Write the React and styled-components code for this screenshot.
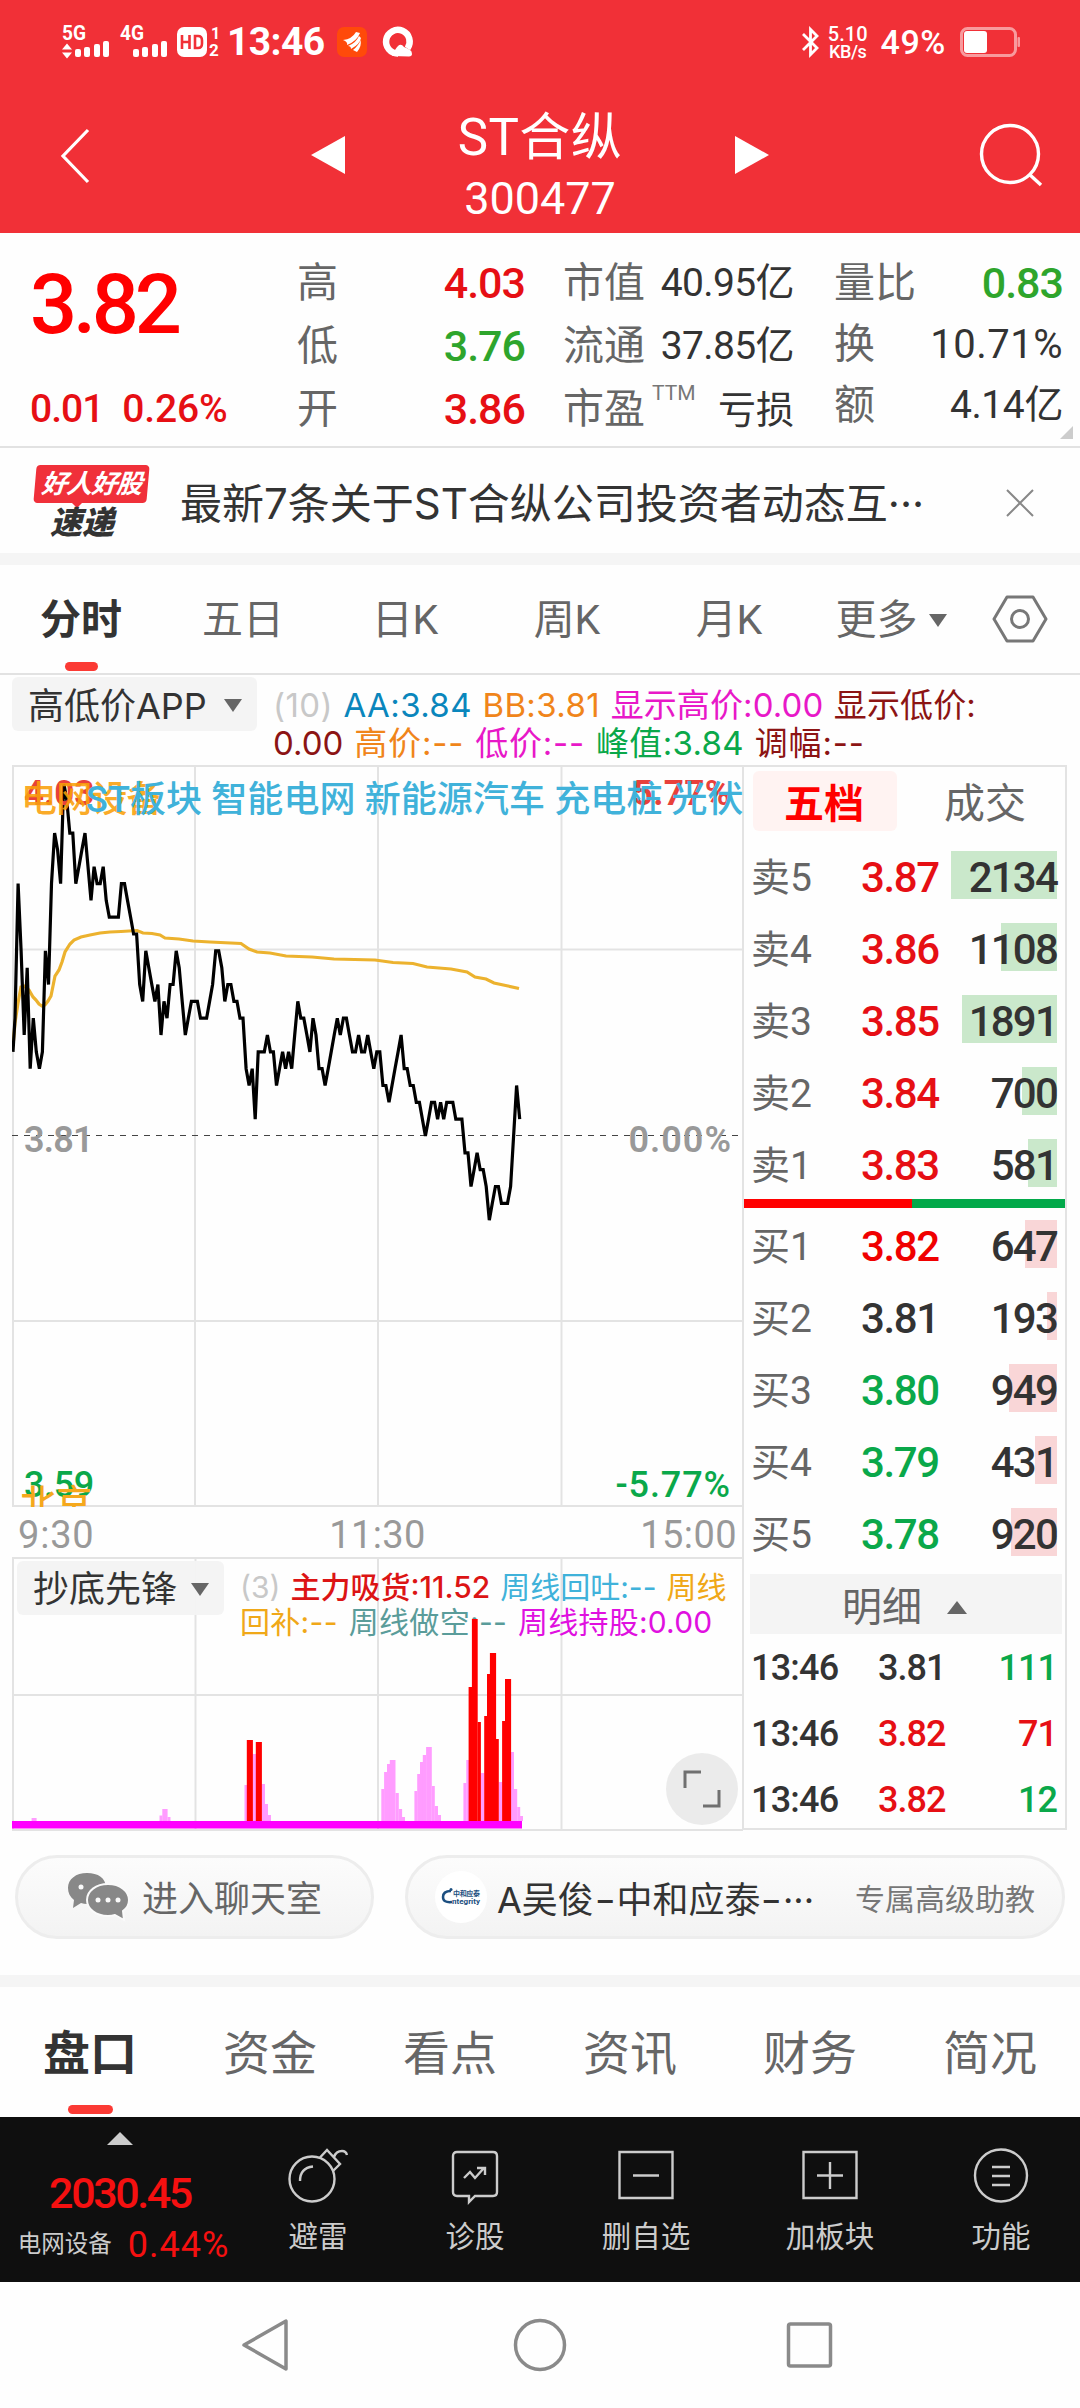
import React from 'react';
import styled, { createGlobalStyle } from 'styled-components';

const GlobalStyle = createGlobalStyle`
	* {
		box-sizing: border-box;
	}
	body {
		margin: 0;
		background: #fefefe;
		font-family: Roboto, 'Noto Sans CJK SC', sans-serif;
		color: #333;
	}
	svg {
		display: block;
		flex: none;
		overflow: visible;
	}
`;

const RED = '#e60f14';
const GREEN = '#0aa84a';

const Page = styled.div`
	width: 1080px;
	height: 2408px;
	display: flex;
	flex-direction: column;
	overflow: hidden;
	background: #fefefe;
`;
// single line of text, every label on the page goes through this
const Text = styled.span`
	font-size: ${(p) => p.$size}px;
	line-height: ${(p) => p.$line || p.$size}px;
	font-weight: ${(p) => p.$weight || 400};
	letter-spacing: ${(p) => p.$track || 0}px;
	color: ${(p) => p.$color || 'inherit'};
	white-space: pre;
`;
// rounder and wider latin, used for names and indicator values
const WideText = styled(Text)`
	font-family: Inter, 'Noto Sans CJK SC', sans-serif;
`;

/* ---------- header ---------- */
const Header = styled.header`
	height: 233px;
	flex: none;
	background: #f13037;
	color: #fff;
`;
const StatusBar = styled.div`
	height: 84px;
	display: flex;
	align-items: center;
	justify-content: space-between;
	padding: 0 60px 0 62px;
`;
const StatusGroup = styled.div`
	display: flex;
	align-items: center;
`;
const Clock = styled(Text)`
	width: 98px;
	margin: 0 12px 0 7px;
`;
const QIcon = styled.svg`
	margin-left: 16px;
`;
const NetSpeed = styled.div`
	display: flex;
	flex-direction: column;
	align-items: center;
	margin: 2px 13px 0 8px;
`;
const Battery = styled.svg`
	margin-left: 14px;
`;
const TitleBar = styled.div`
	height: 149px;
	display: grid;
	grid-template-columns: 311px 34px 390px 34px 212px 1fr;
	align-items: center;
`;
const BackIcon = styled.svg`
	margin-left: 60px;
	margin-top: -6px;
`;
const ArrowIcon = styled.svg`
	margin-top: -8px;
`;
const TitleBlock = styled.div`
	height: 100%;
	display: flex;
	flex-direction: column;
	align-items: center;
	padding-top: 25px;
`;
const SearchIcon = styled.svg`
	grid-column: 5 / 7;
	justify-self: end;
	margin: -7px 34px 0 0;
`;

/* ---------- quote ---------- */
const Quote = styled.section`
	height: 215px;
	flex: none;
	display: flex;
	border-bottom: 2px solid #e2e2e2;
	position: relative;
`;
const PriceBlock = styled.div`
	width: 297px;
	padding: 29px 0 0 30px;
`;
const ChangeRow = styled.div`
	display: flex;
	gap: 19px;
	margin-top: 34px;
`;
const Stats = styled.div`
	width: ${(p) => p.$w}px;
	margin-right: ${(p) => p.$gap}px;
	padding-top: 19px;
`;
const Stat = styled.div`
	height: ${(p) => p.$h || 63}px;
	display: flex;
	align-items: center;
	justify-content: space-between;
`;
const StatLabel = styled.div`
	display: flex;
	align-items: flex-start;
	gap: 7px;
`;
const MoreCorner = styled.i`
	position: absolute;
	right: 7px;
	bottom: 7px;
	border-left: 13px solid transparent;
	border-bottom: 13px solid #ccc;
`;

/* ---------- news ---------- */
const News = styled.section`
	height: 105px;
	flex: none;
	display: flex;
	align-items: center;
	padding: 4px 45px 0 32px;
`;
const Badge = styled.div`
	width: 118px;
	height: 76px;
	margin-right: 30px;
	display: flex;
	flex-direction: column;
	align-items: center;
	font-style: italic;
	color: #333;
`;
const BadgeTop = styled.div`
	width: 113px;
	height: 38px;
	border-radius: 4px;
	background: #f0303a;
	color: #fff;
	transform: skewX(-5deg);
	display: flex;
	align-items: center;
	justify-content: center;
`;
const BadgePointer = styled.i`
	border: 5px solid transparent;
	border-top-color: #f0303a;
	border-bottom: 0;
	margin-left: -28px;
`;
const BadgeBottom = styled(Text)`
	margin-left: -18px;
`;
const NewsTitle = styled(WideText)`
	flex: 1;
	padding-top: 2px;
`;
const Band = styled.div`
	height: 12px;
	flex: none;
	background: #f5f5f5;
`;

/* ---------- tabs ---------- */
const PeriodTabs = styled.nav`
	height: 110px;
	flex: none;
	display: flex;
	border-bottom: 2px solid #e2e2e2;
`;
const Tab = styled.div`
	width: ${(p) => p.$w}px;
	display: flex;
	align-items: center;
	justify-content: center;
	gap: 11px;
	position: relative;
	padding-top: 2px;
`;
const Underline = styled.i`
	position: absolute;
	bottom: ${(p) => p.$bottom}px;
	width: ${(p) => p.$w}px;
	height: 9px;
	border-radius: 5px;
	background: #fb3a34;
`;
const HexIcon = styled.svg`
	margin: 29px 0 0 20px;
`;
const Triangle = styled.i`
	width: 0;
	border: ${(p) => p.$half || 9}px solid transparent;
	border-${(p) => (p.$up ? 'bottom' : 'top')}: 13px solid ${(p) => p.$color || '#666'};
	border-${(p) => (p.$up ? 'top' : 'bottom')}: 0;
`;

/* ---------- chart ---------- */
const LegendBar = styled.div`
	height: 90px;
	flex: none;
	display: flex;
	padding: 2px 0 0 12px;
`;
const IndicatorButton = styled.div`
	width: ${(p) => p.$w}px;
	height: 54px;
	flex: none;
	margin-right: 16px;
	padding: 3px 15px 0 16px;
	border-radius: 6px;
	background: rgba(243, 243, 243, 0.95);
	display: flex;
	align-items: center;
	justify-content: space-between;
`;
const Legend = styled.div`
	padding-top: ${(p) => p.$top}px;
`;
const LegendLine = styled.div`
	height: ${(p) => p.$h}px;
	display: flex;
	gap: ${(p) => p.$gap}px;
	align-items: center;
`;
const Board = styled.section`
	height: 1065px;
	flex: none;
	display: flex;
	padding-left: 12px;
`;
const Charts = styled.div`
	width: 730px;
`;
const ChartBox = styled.div`
	position: relative;
	width: 731px;
	height: ${(p) => p.$h}px;
	overflow: hidden;
`;
const ChartLabel = styled(Text)`
	position: absolute;
	top: ${(p) => p.$y}px;
	${(p) => (p.$right !== undefined ? `right: ${p.$right}px` : `left: ${p.$x}px`)};
`;
const TimeAxis = styled.div`
	height: 50px;
	display: grid;
	grid-template-columns: 1fr 1fr 1fr;
	align-items: center;
	padding: 5px 5px 0 6px;
	color: #999;
	& > :nth-child(2) {
		text-align: center;
	}
	& > :nth-child(3) {
		text-align: right;
	}
`;
const SubOverlay = styled.div`
	position: absolute;
	top: 4px;
	left: 5px;
	display: flex;
`;
const BarsLayer = styled.svg`
	position: absolute;
	top: 0;
	left: 0;
`;
const ExpandButton = styled.div`
	position: absolute;
	left: 654px;
	top: 196px;
	width: 72px;
	height: 72px;
	border-radius: 50%;
	background: rgba(234, 234, 234, 0.95);
	display: flex;
	align-items: center;
	justify-content: center;
`;

/* ---------- order book ---------- */
const Book = styled.aside`
	width: 325px;
	border: 2px solid #e3e3e3;
`;
const BookTabs = styled.div`
	display: flex;
	height: 72px;
	padding: 4px 0 0 9px;
`;
const BookTab = styled.div`
	width: ${(p) => p.$w}px;
	height: 60px;
	flex: none;
	padding: 7px 2px 0 0;
	border-radius: 6px;
	background: ${(p) => (p.$active ? '#fff3f2' : 'none')};
	display: flex;
	align-items: center;
	justify-content: center;
`;
const Level = styled.div`
	height: 72px;
	display: grid;
	grid-template-columns: 110px 90px 1fr;
	align-items: center;
	padding: 0 8px 0 7px;
	& > span {
		padding-top: 6px;
	}
`;
const Volume = styled.div`
	height: 48px;
	padding-top: 6px;
	display: flex;
	align-items: center;
	justify-content: flex-end;
	background: linear-gradient(${(p) => p.$fill}, ${(p) => p.$fill}) right / ${(p) => p.$bar}px 100% no-repeat;
`;
const RatioBar = styled.div`
	height: 9px;
	background: linear-gradient(90deg, #ff0000 168px, #02a94a 168px);
`;
const DetailHead = styled.div`
	height: 60px;
	margin: 6px 3px 0 6px;
	padding: 7px 3px 0 0;
	background: #f4f4f4;
	display: flex;
	align-items: center;
	justify-content: center;
	gap: 25px;
`;
const Trade = styled.div`
	height: 66px;
	display: grid;
	grid-template-columns: 127px 90px 1fr;
	align-items: center;
	padding: 2px 8px 0 7px;
	& > :last-child {
		text-align: right;
	}
`;

/* ---------- below the chart ---------- */
const ChatRow = styled.div`
	height: 145px;
	flex: none;
	display: flex;
	gap: 31px;
	padding: 25px 0 0 15px;
`;
const Pill = styled.div`
	width: ${(p) => p.$w}px;
	height: 84px;
	border-radius: 42px;
	border: 3px solid #ededed;
	background: linear-gradient(#fcfcfc, #f3f3f3);
	display: flex;
	align-items: center;
	padding: 0 27px 0 ${(p) => p.$pad}px;
	& > span {
		padding-top: 5px;
	}
`;
const ChatIcon = styled.svg`
	margin-right: 12px;
`;
const Avatar = styled.div`
	width: 52px;
	height: 52px;
	margin-right: 10px;
	border-radius: 50%;
	background: #fff;
	display: flex;
	align-items: center;
	justify-content: center;
	flex: none;
`;
// hyphen stretched to the width of the surrounding glyphs
const Dash = styled.b`
	display: inline-block;
	font-weight: 400;
	transform: scaleX(1.3);
	margin: 0 3px;
`;
const PillNote = styled(Text)`
	margin-left: auto;
`;
const SectionTabs = styled.nav`
	height: 130px;
	flex: none;
	display: flex;
`;

/* ---------- bottom ---------- */
const BottomBar = styled.footer`
	height: 165px;
	flex: none;
	display: flex;
	background: #0f0f0f;
	color: #ccc;
`;
const Sector = styled.div`
	width: 240px;
	display: flex;
	flex-direction: column;
	align-items: center;
	padding-top: 15px;
`;
const SectorValue = styled(Text)`
	margin-top: 26px;
`;
const SectorRow = styled.div`
	display: flex;
	align-items: center;
	gap: 16px;
	margin: 12px 0 0 7px;
`;
const Actions = styled.div`
	flex: 1;
	display: grid;
	grid-template-columns: 156px 158px 184px 184px 1fr;
`;
const Action = styled.div`
	display: flex;
	flex-direction: column;
	align-items: center;
	gap: 12px;
	padding-top: 30px;
`;
const SystemNav = styled.div`
	flex: 1;
	display: flex;
	justify-content: center;
	align-items: center;
	gap: 216px;
	padding-right: 5px;
	& > :first-child {
		margin-right: 7px;
	}
	& > :last-child {
		margin-left: 2px;
	}
`;

// price in ticks of 0.01 above or below yesterday's close, one per minute
const ticks = [
	5, 7, 15, 11, 6, 10, 4, 7, 5, 4, 5, 11, 9, 15, 18, 17, 15, 21, 20, 18, 18, 15, 16, 17, 18, 16, 14, 16, 15, 15, 16, 14,
	13, 13, 13, 13, 15, 15, 14, 13, 12, 12, 9, 8, 11, 10, 9, 8, 9, 6, 8, 7, 9, 9, 11, 10, 8, 6, 7, 8, 8, 8, 7, 7, 7, 8, 9,
	11, 11, 10, 8, 9, 9, 8, 8, 7, 7, 4, 3, 4, 1, 5, 5, 5, 6, 5, 5, 3, 4, 5, 4, 5, 4, 6, 8, 7, 7, 6, 5, 7, 6, 4, 4, 3, 4,
	5, 6, 7, 6, 7, 7, 6, 5, 5, 6, 5, 5, 6, 5, 4, 5, 5, 3, 3, 2, 3, 4, 5, 6, 4, 4, 3, 3, 2, 2, 1, 0, 1, 2, 2, 1, 2, 1, 2,
	2, 2, 1, 1, 1, -1, -1, -3, -2, -1, -2, -2, -3, -5, -4, -3, -3, -4, -4, -4, -3, 0, 3, 1,
];
const priceLine = ticks.map((t, i) => `${Math.max(1, i * 3.04).toFixed(1)},${(371 - t * 16.83).toFixed(1)}`).join(' ');

const averageLine =
	'1,281 3,258 6,238 9,222 12,221 17,225 21,232 24,235 27,239 30,241 33,240 36,236 39,231 41,221 43,211 47,205 50,197 53,187 58,179 62,175 69,172 78,170 88,168 98,167 109,166.500 125,165.500 131,168 140,168.500 148,170 153,173 167,174 181,176 198,177 229,178.500 237,184 245,187 258,188 274,191 300,192 322,194 363,195 381,197.500 401,198.500 415,202 439,204 455,207 463,212 474,214 482,218 496,221 507,223.500';

// x, width, height
const pinkBars = [
	[31.6, 5, 3], [159.5, 3, 5.5], [162.3, 5.3, 12], [167.5, 3, 4], [244.5, 3, 36], [253, 3, 67], [262, 3, 37],
	[264.8, 3.2, 17], [268, 3, 6], [381.3, 3, 32], [384.1, 3, 49], [387, 3, 57], [389.8, 5.7, 61], [395.5, 3.3, 28],
	[398.8, 3.3, 12], [402, 3, 4], [414.4, 3, 30], [417.2, 3, 47], [420, 3, 59], [422.8, 3.3, 66], [426.1, 5.7, 74],
	[431.8, 3, 35], [434.6, 3.4, 15], [438, 3, 6], [463.4, 3, 38], [466.3, 3, 61], [480.9, 3.3, 48], [498.8, 3.3, 39],
	[511, 3, 69], [513.9, 3.3, 32], [517.2, 3, 14], [520, 3, 5],
];
const redBars = [
	[246.8, 6.1, 81], [255.8, 6.1, 79], [468.6, 3.4, 134], [471.9, 5.8, 202], [477.6, 3.3, 99], [484.2, 2.9, 105],
	[487, 3, 147], [489.9, 6.2, 168], [496, 2.8, 82], [502.1, 3, 100], [505, 6.1, 142],
];

const sells = [
	['卖5', '3.87', '2134', 107, RED],
	['卖4', '3.86', '1108', 56, RED],
	['卖3', '3.85', '1891', 95, RED],
	['卖2', '3.84', '700', 35, RED],
	['卖1', '3.83', '581', 29, RED],
];
const buys = [
	['买1', '3.82', '647', 32, '#f00000'],
	['买2', '3.81', '193', 10, '#333'],
	['买3', '3.80', '949', 48, GREEN],
	['买4', '3.79', '431', 22, GREEN],
	['买5', '3.78', '920', 46, GREEN],
];
const trades = [
	['13:46', '3.81', '111', '#333', GREEN],
	['13:46', '3.82', '71', RED, RED],
	['13:46', '3.82', '12', RED, GREEN],
];

function Signal({ label, arrows }) {
	return (
		<svg width={arrows ? 58 : 57} height='36' viewBox={arrows ? '0 0 58 36' : '0 0 57 36'} fill='#fff'>
			<text x='0' y='16' fontSize='20' fontWeight='700' textLength='24' lengthAdjust='spacingAndGlyphs'>
				{label}
			</text>
			{arrows && <path d='M0 25.500l5-6 5 6zM0 28.500l5 6 5-6z' />}
			<rect x='13' y='25' width='6' height='8' rx='2' />
			<rect x='22' y='23' width='6' height='10' rx='2' />
			<rect x='32' y='20' width='6' height='13' rx='2' />
			<rect x='41' y='17' width='6' height='16' rx='2' />
		</svg>
	);
}

function Top() {
	return (
		<Header>
			<StatusBar>
				<StatusGroup>
					<Signal label='5G' arrows />
					<Signal label='4G' />
					<svg width='43' height='32' viewBox='0 0 43 32' fill='#fff'>
						<rect x='0' y='1' width='30' height='30' rx='7' />
						<path d='M5 9v14M5 16h7.500M12.500 9v14M18 10v12h3q4 0 4-4.500v-3q0-4.500-4-4.500z' fill='none' stroke='#f13037' strokeWidth='2.600' />
						<text x='34' y='13' fontSize='16' fontWeight='700'>1</text>
						<text x='32' y='30' fontSize='17' fontWeight='700'>2</text>
					</svg>
					<Clock $size={39} $weight={700} $track={-0.6}>13:46</Clock>
					<svg width='30' height='30' viewBox='0 0 30 30'>
						<rect width='30' height='30' rx='7' fill='#ff4a0a' />
						<path d='M6 13Q15 12 19 5L23 6Q20 14 10 18Q11 15 6 13zM11 19Q19 16 22 9L24 11Q23 17 14 22Q14 19 11 19zM16 23Q22 18 23.500 13Q25 19 20 25z' fill='#fff' />
					</svg>
					<QIcon width='30' height='30' viewBox='0 0 30 30'>
						<path d='M24.500 21.500A11.800 11.800 0 1 0 15 26.500' fill='none' stroke='#fff' strokeWidth='6.500' />
						<path d='M9 29q3-7 6-10 3-3 6 1 3 1 6 3 2 1 2 4 0 2-3 2.500z' fill='#fff' />
					</QIcon>
				</StatusGroup>
				<StatusGroup>
					<svg width='19' height='30' viewBox='0 0 19 30' fill='none' stroke='#fff' strokeWidth='2.800'>
						<path d='M2 7l14 14-6.500 6.500V2.500L16 9 2 23' />
					</svg>
					<NetSpeed>
						<Text $size={20} $line={17} $weight={500}>5.10</Text>
						<Text $size={18} $line={17} $weight={500} $track={-0.4}>KB/s</Text>
					</NetSpeed>
					<Text $size={34} $line={34} $weight={500} $track={0.6}>49%</Text>
					<Battery width='60' height='30' viewBox='0 0 60 30'>
						<rect x='1.500' y='1.500' width='54' height='27' rx='6' fill='none' stroke='#f89a9d' strokeWidth='3' />
						<rect x='4' y='4' width='23' height='22' rx='3' fill='#fff' />
						<rect x='57.500' y='10' width='2.500' height='10' rx='1' fill='#f89a9d' />
					</Battery>
				</StatusGroup>
			</StatusBar>
			<TitleBar>
				<BackIcon width='32' height='56' viewBox='0 0 32 56' fill='none' stroke='#fff' strokeWidth='3.200'>
					<path d='M28 2L3 28l25 26' />
				</BackIcon>
				<ArrowIcon width='34' height='40' viewBox='0 0 34 40'>
					<path d='M34 1v38L0 20z' fill='#fff' />
				</ArrowIcon>
				<TitleBlock>
					<Text $size={51} $line={58} $track={0.4}>ST合纵</Text>
					<Text $size={45} $line={64}>300477</Text>
				</TitleBlock>
				<ArrowIcon width='34' height='40' viewBox='0 0 34 40'>
					<path d='M0 1v38L34 20z' fill='#fff' />
				</ArrowIcon>
				<SearchIcon width='66' height='66' viewBox='0 0 66 66' fill='none' stroke='#fff' strokeWidth='3.400'>
					<circle cx='30' cy='32' r='28.500' />
					<path d='M49 52l12 11' />
				</SearchIcon>
			</TitleBar>
		</Header>
	);
}

function QuotePanel() {
	return (
		<Quote>
			<PriceBlock>
				<Text as='div' $size={83} $line={86} $weight={500} $track={-4.2} $color='#ff0000'>3.82</Text>
				<ChangeRow>
					<Text $size={39} $line={54} $weight={500} $track={-1} $color={RED}>0.01</Text>
					<Text $size={39} $line={54} $weight={500} $track={-0.2} $color={RED}>0.26%</Text>
				</ChangeRow>
			</PriceBlock>
			<Stats $w={228} $gap={38}>
				<Stat>
					<Text $size={41} $color='#666'>高</Text>
					<Text $size={43} $weight={500} $track={-1} $color={RED}>4.03</Text>
				</Stat>
				<Stat>
					<Text $size={41} $color='#666'>低</Text>
					<Text $size={43} $weight={500} $track={-1} $color='#2ea52c'>3.76</Text>
				</Stat>
				<Stat>
					<Text $size={41} $color='#666'>开</Text>
					<Text $size={43} $weight={500} $track={-1} $color={RED}>3.86</Text>
				</Stat>
			</Stats>
			<Stats $w={231} $gap={40}>
				<Stat>
					<Text $size={41} $color='#666'>市值</Text>
					<Text $size={39} $track={-0.6}>40.95亿</Text>
				</Stat>
				<Stat>
					<Text $size={41} $color='#666'>流通</Text>
					<Text $size={39} $track={-0.6}>37.85亿</Text>
				</Stat>
				<Stat>
					<StatLabel>
						<Text $size={41} $color='#666'>市盈</Text>
						<Text $size={21} $line={8} $color='#777'>TTM</Text>
					</StatLabel>
					<Text $size={38}>亏损</Text>
				</Stat>
			</Stats>
			<Stats $w={229} $gap={0}>
				<Stat $h={62}>
					<Text $size={41} $color='#666'>量比</Text>
					<Text $size={43} $weight={500} $track={-1} $color='#2ea52c'>0.83</Text>
				</Stat>
				<Stat $h={61}>
					<Text $size={41} $color='#666'>换</Text>
					<Text $size={40} $track={0.5}>10.71%</Text>
				</Stat>
				<Stat $h={61}>
					<Text $size={41} $color='#666'>额</Text>
					<Text $size={39} $track={-0.4}>4.14亿</Text>
				</Stat>
			</Stats>
			<MoreCorner />
		</Quote>
	);
}

function NewsRow() {
	return (
		<News>
			<Badge>
				<BadgeTop>
					<Text $size={26} $weight={700} $track={-1}>好人好股</Text>
				</BadgeTop>
				<BadgePointer />
				<BadgeBottom $size={32} $line={30} $weight={900}>速递</BadgeBottom>
			</Badge>
			<NewsTitle $size={42}>最新7条关于ST合纵公司投资者动态互···</NewsTitle>
			<svg width='30' height='30' viewBox='0 0 30 30' stroke='#888' strokeWidth='2'>
				<path d='M2 2l26 26M28 2L2 28' />
			</svg>
		</News>
	);
}

function Periods() {
	return (
		<PeriodTabs>
			{['分时', '五日', '日K', '周K', '月K', '更多'].map((name, i) => (
				<Tab key={name} $w={162}>
					<Text $size={41} $weight={i ? 400 : 700} $color={i ? '#666' : '#333'}>{name}</Text>
					{i === 0 && <Underline $w={33} $bottom={2} />}
					{i === 5 && <Triangle />}
				</Tab>
			))}
			<HexIcon width='56' height='50' viewBox='0 0 56 50' fill='none' stroke='#777' strokeWidth='3'>
				<path d='M15 3h26l13 22-13 22H15L2 25z' strokeLinejoin='round' />
				<circle cx='28' cy='25' r='8.500' />
			</HexIcon>
		</PeriodTabs>
	);
}

function MainChart() {
	return (
		<ChartBox $h={742}>
			<ChartLabel $x={12} $y={11} $size={35} $line={36} $weight={700} $color='#e8413b'>4.03</ChartLabel>
			<ChartLabel $right={12} $y={11} $size={35} $line={36} $weight={700} $track={0.4} $color='#e8413b'>5.77%</ChartLabel>
			<ChartLabel $x={12} $y={702} $size={36} $line={36} $weight={500} $track={-0.4} $color={GREEN}>3.59</ChartLabel>
			<ChartLabel $right={12} $y={702} $size={36} $line={36} $weight={500} $track={0.9} $color={GREEN}>-5.77%</ChartLabel>
			<svg width='731' height='742' viewBox='0 0 731 742' fill='none'>
				<path d='M1 0V742M183 0V742M366 0V742M549.500 0V742M0 1H731M0 184.500H731M0 556H731M0 741H731' stroke='#e3e3e3' strokeWidth='2' />
				<path d='M0 370.500H731' stroke='#444' strokeWidth='1.200' strokeDasharray='6 6' />
				<polyline points={averageLine} stroke='#ecb22e' strokeWidth='3.200' />
				<polyline points={priceLine} stroke='#000' strokeWidth='3.200' />
			</svg>
			<ChartLabel $x={12} $y={357} $size={36} $line={36} $weight={600} $track={-0.8} $color='#999'>3.81</ChartLabel>
			<ChartLabel $right={11} $y={357} $size={36} $line={36} $weight={600} $track={1} $color='#999'>0.00%</ChartLabel>
			<ChartLabel $x={9} $y={17} $size={36} $line={36} $track={-0.8} $weight={500} $color='rgba(250,160,10,0.9)'>电网设备</ChartLabel>
			<ChartLabel $x={74} $y={17} $size={36} $line={36} $track={0.1} $weight={500} $color='#40b2da'>
				ST板块 智能电网 新能源汽车 充电桩 光伏
			</ChartLabel>
			<ChartLabel $x={8} $y={721} $size={36} $line={36} $weight={500} $color='#f5a81c'>北京</ChartLabel>
		</ChartBox>
	);
}

function SubChart() {
	return (
		<ChartBox $h={274}>
			<svg width='731' height='274' viewBox='12 0 731 274'>
				<path d='M13 0V274M195.500 0V274M378 0V274M561.500 0V274M12 1H743M12 138H743M12 273H743' stroke='#e3e3e3' strokeWidth='2' />
			</svg>
			<SubOverlay>
				<IndicatorButton $w={207}>
					<Text $size={36}>抄底先锋</Text>
					<Triangle />
				</IndicatorButton>
				<Legend $top={8}>
					<LegendLine $h={35} $gap={10}>
						<WideText $size={30} $color='#c8c8c8'>(3)</WideText>
						<WideText $size={30} $weight={500} $color='#dc1414'>主力吸货:11.52</WideText>
						<WideText $size={30} $color='#40b2da'>周线回吐:--</WideText>
						<WideText $size={30} $color='#f0a818'>周线</WideText>
					</LegendLine>
					<LegendLine $h={35} $gap={11}>
						<WideText $size={30} $track={0.3} $color='#f0a818'>回补:--</WideText>
						<WideText $size={30} $track={0.3} $color='#5a9c9a'>周线做空:--</WideText>
						<WideText $size={30} $track={0.2} $color='#e010e0'>周线持股:0.00</WideText>
					</LegendLine>
				</Legend>
			</SubOverlay>
			<BarsLayer width='731' height='274' viewBox='12 0 731 274'>
				{pinkBars.map(([x, w, h]) => (
					<rect key={x} x={x} y={264 - h} width={w} height={h} fill='#ff9cff' />
				))}
				{redBars.map(([x, w, h]) => (
					<rect key={x} x={x} y={264 - h} width={w} height={h} fill='#ff0000' />
				))}
				<rect x='12' y='264' width='510' height='7.500' fill='#ff00ff' />
			</BarsLayer>
			<ExpandButton>
				<svg width='38' height='38' viewBox='0 0 38 38' fill='none' stroke='#707070' strokeWidth='3'>
					<path d='M2 18V2h16M36 20v16H20' />
				</svg>
			</ExpandButton>
		</ChartBox>
	);
}

function Levels({ rows, fill }) {
	return rows.map(([name, price, volume, bar, color]) => (
		<Level key={name}>
			<Text $size={39} $color='#666'>{name}</Text>
			<Text $size={42} $weight={500} $track={-1.4} $color={color}>{price}</Text>
			<Volume $bar={bar} $fill={fill}>
				<Text $size={42} $weight={500} $track={-1.8}>{volume}</Text>
			</Volume>
		</Level>
	));
}

function OrderBook() {
	return (
		<Book>
			<BookTabs>
				<BookTab $w={144} $active>
					<Text $size={40} $weight={700} $color='#ff0000'>五档</Text>
				</BookTab>
				<BookTab $w={178}>
					<Text $size={41} $color='#666'>成交</Text>
				</BookTab>
			</BookTabs>
			<Levels rows={sells} fill='#cae8cb' />
			<RatioBar />
			<Levels rows={buys} fill='#f9d6d7' />
			<DetailHead>
				<Text $size={40} $color='#666'>明细</Text>
				<Triangle $up $half={10} />
			</DetailHead>
			{trades.map(([time, price, volume, priceColor, volumeColor], i) => (
				<Trade key={i}>
					<Text $size={36} $weight={500} $track={-0.8}>{time}</Text>
					<Text $size={36} $weight={500} $track={-1} $color={priceColor}>{price}</Text>
					<Text $size={36} $weight={500} $track={-1} $color={volumeColor}>{volume}</Text>
				</Trade>
			))}
		</Book>
	);
}

function ChatEntries() {
	return (
		<ChatRow>
			<Pill $w={359} $pad={50}>
				<ChatIcon width='62' height='50' viewBox='0 0 62 50'>
					<path d='M19 1C8 1 0 7 0 16c0 5 2 9 6 12l-1 8 8-5q3 1 6 1C31 32 38 26 38 16S30 1 19 1z' fill='#888' />
					<path d='M40 12c12 0 21 7 21 16 0 5-3 9-6 11l1 9-9-5q-3 1-7 1c-12 0-21-7-21-16s9-16 21-16z' fill='#888' stroke='#fafafa' strokeWidth='2' />
					<circle cx='13' cy='15' r='2.500' fill='#fafafa' />
					<circle cx='30' cy='28' r='2.500' fill='#fafafa' />
					<circle cx='40' cy='28' r='2.500' fill='#fafafa' />
					<circle cx='50' cy='28' r='2.500' fill='#fafafa' />
				</ChatIcon>
				<Text $size={36} $color='#666'>进入聊天室</Text>
			</Pill>
			<Pill $w={660} $pad={27}>
				<Avatar>
					<svg width='40' height='18' viewBox='0 0 40 18'>
						<path d='M10 3Q2 3 2 9t9 5' fill='none' stroke='#1c4f80' strokeWidth='2.500' />
						<circle cx='10' cy='1.500' r='1.500' fill='#1c4f80' />
						<text x='12' y='8' fontSize='7' fontWeight='700' fill='#1c4f80' textLength='27'>中和应泰</text>
						<text x='11' y='16' fontSize='8' fontWeight='700' fill='#1c4f80' textLength='28'>ntegrity</text>
					</svg>
				</Avatar>
				<WideText $size={36}>
					A吴俊<Dash>-</Dash>中和应泰<Dash>-</Dash>···
				</WideText>
				<PillNote $size={30} $color='#777'>专属高级助教</PillNote>
			</Pill>
		</ChatRow>
	);
}

function Sections() {
	return (
		<SectionTabs>
			{['盘口', '资金', '看点', '资讯', '财务', '简况'].map((name, i) => (
				<Tab key={name} $w={180}>
					<Text $size={47} $weight={i ? 400 : 700} $color={i ? '#666' : '#333'}>{name}</Text>
					{i === 0 && <Underline $w={45} $bottom={3} />}
				</Tab>
			))}
		</SectionTabs>
	);
}

const actionIcons = {
	避雷: (
		<>
			<circle cx='24' cy='32' r='22.500' />
			<path d='M12 34q0-13 13-14.500M32 10.500L39 3l13 14-7.500 7.500M39 3l-7 7.500M46 10q2-6 8-6 4 0 5 4' />
		</>
	),
	诊股: (
		<>
			<path d='M12 5h36q4 0 4 4v36q0 4-4 4H30l-6 6v-6H12q-4 0-4-4V9q0-4 4-4z' />
			<path d='M19 31l6-6 5 6 9-10M32 21h8v7' />
		</>
	),
	删自选: <path d='M3.500 5h53v46h-53zM17 28.500h26' />,
	加板块: <path d='M3.500 5h53v46h-53zM17 28.500h26M30 15v27' />,
	功能: (
		<>
			<circle cx='30' cy='28.500' r='26' />
			<path d='M21 20h18M21 29h18M21 38h18' />
		</>
	),
};

function Bottom() {
	return (
		<BottomBar>
			<Sector>
				<Triangle $up $half={13} $color='#ccc' />
				<SectorValue $size={43} $line={44} $weight={500} $track={-2.4} $color='#f51010'>2030.45</SectorValue>
				<SectorRow>
					<Text $size={23.5}>电网设备</Text>
					<Text $size={36} $track={1} $color='#f51010'>0.44%</Text>
				</SectorRow>
			</Sector>
			<Actions>
				{Object.entries(actionIcons).map(([name, icon]) => (
					<Action key={name}>
						<svg width='60' height='62' viewBox='0 0 60 62' fill='none' stroke='#ccc' strokeWidth='2.400'>
							{icon}
						</svg>
						<Text $size={29.5} $line={32}>{name}</Text>
					</Action>
				))}
			</Actions>
		</BottomBar>
	);
}

export default function App() {
	return (
		<Page>
			<GlobalStyle />
			<Top />
			<QuotePanel />
			<NewsRow />
			<Band />
			<Periods />
			<LegendBar>
				<IndicatorButton $w={245}>
					<WideText $size={36}>高低价APP</WideText>
					<Triangle />
				</IndicatorButton>
				<Legend $top={9}>
					<LegendLine $h={38} $gap={10.5}>
						<WideText $size={33} $track={0.4} $color='#c8c8c8'>(10)</WideText>
						<WideText $size={33} $track={0.4} $color='#0a86bc'>AA:3.84</WideText>
						<WideText $size={33} $track={0.4} $color='#f0851a'>BB:3.81</WideText>
						<WideText $size={33} $track={0.1} $color='#e818c8'>显示高价:0.00</WideText>
						<WideText $size={33} $track={0.1} $color='#8c1414'>显示低价:</WideText>
					</LegendLine>
					<LegendLine $h={38} $gap={11}>
						<WideText $size={33} $color='#8c1414'>0.00</WideText>
						<WideText $size={33} $track={0.8} $color='#f0851a'>高价:--</WideText>
						<WideText $size={33} $track={0.8} $color='#e818c8'>低价:--</WideText>
						<WideText $size={33} $track={0.3} $color={GREEN}>峰值:3.84</WideText>
						<WideText $size={33} $track={0.8} $color='#8c1414'>调幅:--</WideText>
					</LegendLine>
				</Legend>
			</LegendBar>
			<Board>
				<Charts>
					<MainChart />
					<TimeAxis>
						<Text $size={38} $track={0.8}>9:30</Text>
						<Text $size={38} $track={0.4}>11:30</Text>
						<Text $size={38} $track={0.4}>15:00</Text>
					</TimeAxis>
					<SubChart />
				</Charts>
				<OrderBook />
			</Board>
			<ChatEntries />
			<Band />
			<Sections />
			<Bottom />
			<SystemNav>
				<svg width='50' height='56' viewBox='0 0 50 56' fill='none' stroke='#8a8a8a' strokeWidth='3.500'>
					<path d='M46 4v48L4 28z' strokeLinejoin='round' />
				</svg>
				<svg width='54' height='54' viewBox='0 0 54 54' fill='none' stroke='#8a8a8a' strokeWidth='3.500'>
					<circle cx='27' cy='27' r='24.500' />
				</svg>
				<svg width='50' height='50' viewBox='0 0 50 50' fill='none' stroke='#8a8a8a' strokeWidth='3.500'>
					<rect x='3.500' y='4' width='42' height='42' rx='2' />
				</svg>
			</SystemNav>
		</Page>
	);
}
